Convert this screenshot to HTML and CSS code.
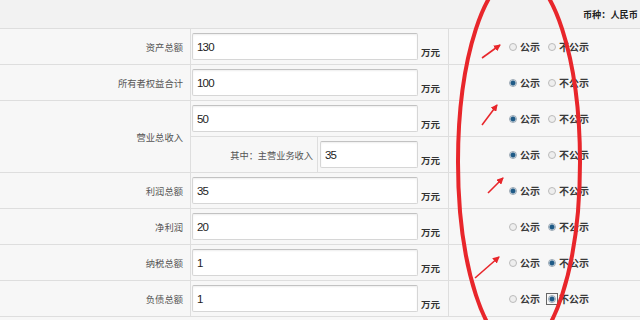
FILE: index.html
```html
<!DOCTYPE html>
<html lang="zh-CN">
<head>
    <meta charset="UTF-8">
    <meta name="viewport" content="width=device-width, initial-scale=1.0">
    <title>企业资产状况信息</title>
    <link rel="stylesheet" href="styles.css">
</head>
<body>
    <div class="sheet">
        <div class="currency">币种：人民币</div>

        <div class="row">
            <div class="name">资产总额</div>
            <div class="amount"><input type="text" value="130"><span class="unit">万元</span></div>
            <div class="pub">
                <label><input type="radio" name="r1">公示</label>
                <label><input type="radio" name="r1">不公示</label>
            </div>
        </div>

        <div class="row">
            <div class="name">所有者权益合计</div>
            <div class="amount"><input type="text" value="100"><span class="unit">万元</span></div>
            <div class="pub">
                <label><input type="radio" name="r2" checked>公示</label>
                <label><input type="radio" name="r2">不公示</label>
            </div>
        </div>

        <div class="row double">
            <div class="name">营业总收入</div>
            <div class="amount first"><input type="text" value="50"><span class="unit">万元</span></div>
            <div class="pub first">
                <label><input type="radio" name="r3" checked>公示</label>
                <label><input type="radio" name="r3">不公示</label>
            </div>
            <div class="amount sub">
                <span class="sub-name">其中：主营业务收入</span>
                <input type="text" class="short" value="35"><span class="unit">万元</span>
            </div>
            <div class="pub">
                <label><input type="radio" name="r4" checked>公示</label>
                <label><input type="radio" name="r4">不公示</label>
            </div>
        </div>

        <div class="row">
            <div class="name">利润总额</div>
            <div class="amount"><input type="text" value="35"><span class="unit">万元</span></div>
            <div class="pub">
                <label><input type="radio" name="r5" checked>公示</label>
                <label><input type="radio" name="r5">不公示</label>
            </div>
        </div>

        <div class="row">
            <div class="name">净利润</div>
            <div class="amount"><input type="text" value="20"><span class="unit">万元</span></div>
            <div class="pub">
                <label><input type="radio" name="r6">公示</label>
                <label><input type="radio" name="r6" checked>不公示</label>
            </div>
        </div>

        <div class="row">
            <div class="name">纳税总额</div>
            <div class="amount"><input type="text" value="1"><span class="unit">万元</span></div>
            <div class="pub">
                <label><input type="radio" name="r7">公示</label>
                <label><input type="radio" name="r7" checked>不公示</label>
            </div>
        </div>

        <div class="row">
            <div class="name">负债总额</div>
            <div class="amount"><input type="text" value="1"><span class="unit">万元</span></div>
            <div class="pub">
                <label><input type="radio" name="r8">公示</label>
                <label><span class="focus"><input type="radio" name="r8" checked></span>不公示</label>
            </div>
        </div>

        <!-- hand-drawn marks on top of the screenshot -->
        <svg class="marks" width="640" height="320" viewBox="0 0 640 320">
            <defs>
                <marker id="head" markerUnits="userSpaceOnUse" markerWidth="7" markerHeight="7" refX="6" refY="3.5" orient="auto">
                    <path d="M0,0 L7,3.5 L0,7 z" fill="#e8262b"/>
                </marker>
            </defs>
            <ellipse cx="519" cy="162" rx="61" ry="188" fill="none" stroke="#e8262b" stroke-width="4"/>
            <line x1="482" y1="58" x2="500" y2="45" stroke="#e8262b" stroke-width="1.6" marker-end="url(#head)"/>
            <line x1="482" y1="125" x2="497" y2="105" stroke="#e8262b" stroke-width="1.6" marker-end="url(#head)"/>
            <line x1="488" y1="193" x2="503" y2="178" stroke="#e8262b" stroke-width="1.6" marker-end="url(#head)"/>
            <line x1="475" y1="278" x2="499" y2="257" stroke="#e8262b" stroke-width="1.6" marker-end="url(#head)"/>
        </svg>
    </div>
</body>
</html>
```

FILE: styles.css
```css
* {
    box-sizing: border-box;
}
body {
    margin: 0;
    background: #f7f7f7;
    font-family: "Noto Sans CJK SC", sans-serif;
    color: #444;
}
.sheet {
    position: relative;
    width: 640px;
    height: 320px;
    overflow: hidden;
}
.currency {
    height: 29px;
    padding-right: 2px;
    border-bottom: 1px solid #dedede;
    background: #f2f2f2;
    text-align: right;
    font-size: 9.2px;
    font-weight: bold;
    line-height: 29px;
    color: #222;
}
.row {
    display: grid;
    grid-template-columns: 191px 258px 1fr;
    grid-template-rows: 35px;
    border-bottom: 1px solid #dedede;
}
.row.double {
    grid-template-rows: 36px 35px;
}
.name {
    display: flex;
    align-items: center;
    justify-content: flex-end;
    padding-right: 7px;
    border-right: 1px solid #dedede;
    font-size: 9.3px;
    color: #555;
}
.double .name {
    grid-row: span 2;
}
.amount {
    display: flex;
    align-items: center;
    padding-left: 1px;
    border-right: 1px solid #dedede;
}
.amount.sub {
    padding-left: 0;
}
.first {
    border-bottom: 1px solid #dedede;
}
.amount input {
    width: 226px;
    height: 27px;
    margin: 0;
    padding: 0 4px;
    border: 1px solid #d6d6d6;
    border-top-color: #c2c2c2;
    border-radius: 2px;
    background: #fff;
    box-shadow: inset 0 1px 2px rgba(0,0,0,0.07);
    font: 11.5px "Liberation Sans", sans-serif;
    letter-spacing: -0.8px;
    color: #222;
}
.amount input.short {
    width: 98px;
    margin-left: 2px;
}
.sub-name {
    align-self: stretch;
    display: flex;
    align-items: center;
    justify-content: flex-end;
    width: 127px;
    padding-right: 4px;
    border-right: 1px solid #dedede;
    font-size: 9.2px;
    color: #555;
}
.unit {
    align-self: flex-end;
    margin: 0 0 7px 3px;
    font-size: 9.5px;
    font-weight: bold;
    line-height: 10px;
    color: #333;
}
.pub {
    display: flex;
    align-items: center;
    padding-left: 60px;
    font-size: 10px;
    font-weight: bold;
    color: #3a3a3a;
}
.pub label {
    display: flex;
    align-items: center;
    margin-right: 8px;
}
.pub input {
    appearance: none;
    width: 8px;
    height: 8px;
    margin: 0 3px 0 0;
    border: 1px solid #bbb;
    border-radius: 50%;
    background: #eee;
}
.pub input:checked {
    border-color: #9aa8b4;
    background: radial-gradient(circle, #1f5a86 0 2px, #d6e1ea 3px);
}
.focus {
    display: flex;
    margin: -2px 1px -2px -2px;
    padding: 1px;
    border: 1px solid #666;
}
.focus input {
    margin: 0;
}
.marks {
    position: absolute;
    top: 0;
    left: 0;
    pointer-events: none;
}
```
